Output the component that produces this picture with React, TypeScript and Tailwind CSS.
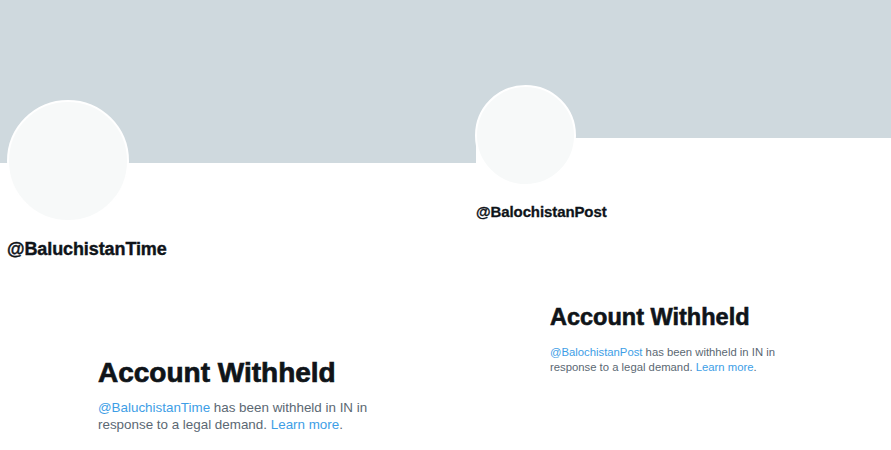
type Profile = {
  handle: string;
};

function WithheldNotice({ handle, big }: Profile & { big: boolean }) {
  return (
    <div className={big ? "w-[292px]" : "w-[246px]"}>
      <h2
        className={
          big
            ? "text-[28px] leading-[28px] font-bold text-[#0f1419] [-webkit-text-stroke:0.7px_#0f1419]"
            : "text-[23.5px] leading-[23px] font-bold text-[#0f1419] [-webkit-text-stroke:0.6px_#0f1419]"
        }
      >
        Account Withheld
      </h2>
      <p
        className={
          big
            ? "mt-[12px] text-[13.4px] leading-[17px] text-[#5b6873]"
            : "mt-[16px] text-[11.3px] leading-[14.5px] text-[#5b6873]"
        }
      >
        <span className="text-[#3d9ee6]">@{handle}</span> has been withheld in
        IN in response to a legal demand.{" "}
        <span className="text-[#3d9ee6]">Learn more</span>.
      </p>
    </div>
  );
}

export default function App() {
  return (
    <div
      className="flex h-[450px] w-[891px] overflow-hidden bg-white"
      style={{ fontFamily: '"Liberation Sans", Arial, sans-serif' }}
    >
      {/* left capture */}
      <section className="flex w-[476px] shrink-0 flex-col">
        <div className="h-[163px] bg-[#cfd9de]" />
        <div className="ml-[7px] -mt-[63px] h-[122px] w-[122px] rounded-full border-2 border-white bg-[#f7f9f9]" />
        <div className="mt-[18px] ml-[7px] text-[18px] leading-[18px] font-bold tracking-[-0.1px] text-[#0f1419] [-webkit-text-stroke:0.4px_#0f1419]">
          @BaluchistanTime
        </div>
        <div className="mt-[101px] ml-[98px]">
          <WithheldNotice handle="BaluchistanTime" big />
        </div>
      </section>

      {/* right capture */}
      <section className="flex flex-1 flex-col">
        <div className="h-[138px] bg-[#cfd9de]" />
        <div className="-ml-[1px] -mt-[53px] h-[101px] w-[101px] rounded-full border-2 border-white bg-[#f7f9f9]" />
        <div className="mt-[18px] text-[15px] leading-[15px] font-bold tracking-[-0.1px] text-[#0f1419] [-webkit-text-stroke:0.3px_#0f1419]">
          @BalochistanPost
        </div>
        <div className="mt-[87px] ml-[74px]">
          <WithheldNotice handle="BalochistanPost" big={false} />
        </div>
      </section>
    </div>
  );
}
